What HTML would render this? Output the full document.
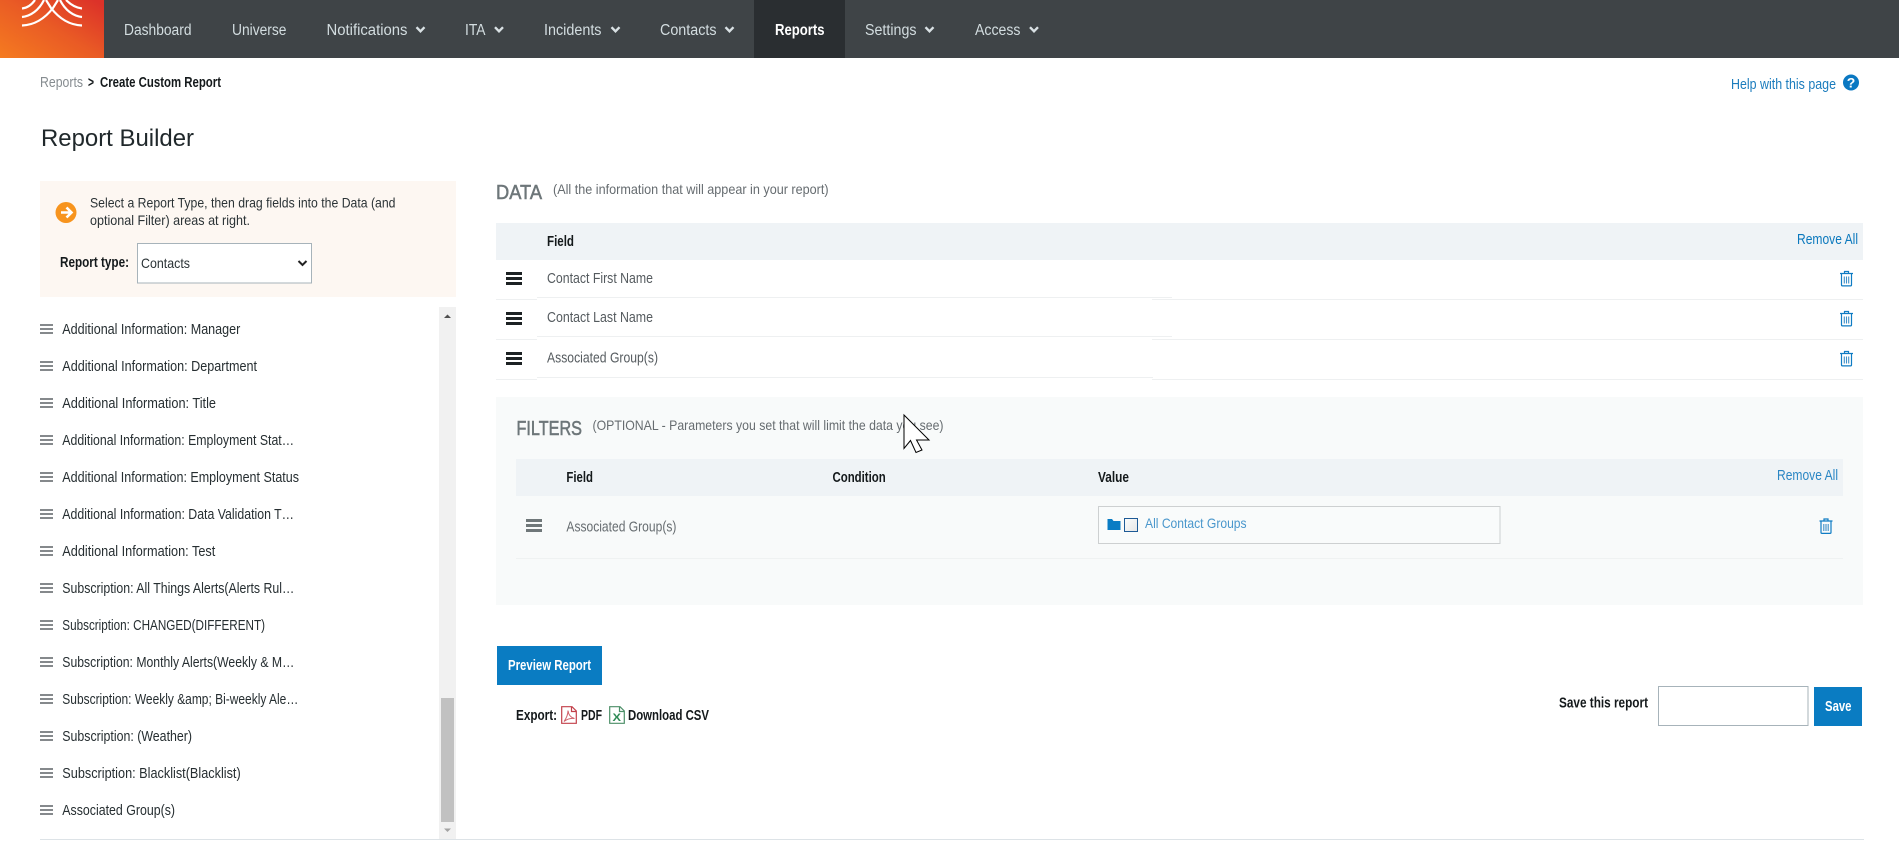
<!DOCTYPE html>
<html lang="en">
<head>
<meta charset="utf-8">
<title>Report Builder</title>
<style>
html,body{margin:0;padding:0;background:#fff;width:1899px;height:844px;overflow:hidden}
svg{display:block}
text{font-family:"Liberation Sans",Arial,sans-serif;font-size:14.5px;fill:#2b3336}
.nav{font-size:15.5px;fill:#d3dde0}
.b{font-weight:bold;fill:#14191b}
.g{fill:#666c70}
.l{fill:#0a78bd}
.li{fill:#262e31}
.h{font-size:20px;fill:#6d7679;stroke:#6d7679;stroke-width:.55}
</style>
</head>
<body>
<svg width="1899" height="844" viewBox="0 0 1899 844" xmlns="http://www.w3.org/2000/svg">
<defs>
<linearGradient id="lg" x1="0" y1="1" x2="1" y2="0.1">
<stop offset="0" stop-color="#f57b20"/><stop offset="0.55" stop-color="#e95a25"/><stop offset="1" stop-color="#dc3229"/>
</linearGradient>
<linearGradient id="cb" x1="0" y1="0" x2="1" y2="1">
<stop offset="0" stop-color="#fbfcfc"/><stop offset="1" stop-color="#e6e6e6"/>
</linearGradient>
<symbol id="chev" viewBox="0 0 10 7"><path d="M1 1.2 5 5.3 9 1.2" fill="none" stroke="#d9e1e4" stroke-width="2.4"/></symbol>
<symbol id="trash" viewBox="0 0 14 16">
<path d="M5 2.500V1h4v1.500M.5 3h13M2 3.200V14.400c0 .6.4 1 1 1h8c.6 0 1-.4 1-1V3.200" fill="none" stroke="#0f7cc4" stroke-width="1.200"/>
<path d="M4.800 6v7M7 6v7M9.200 6v7" stroke="#3f8fc7" stroke-width="1.100"/>
</symbol>
<symbol id="menu" viewBox="0 0 16 13"><path d="M0 0h16v3H0zM0 5h16v3H0zM0 10h16v3H0z"/></symbol>
<symbol id="lmenu" viewBox="0 0 13 10"><path d="M0 0h13v2H0zM0 4h13v2H0zM0 8h13v2H0z" fill="#85898c"/></symbol>
</defs>

<!-- top nav -->
<rect width="1899" height="58" fill="#3f4447"/>
<rect width="104" height="58" fill="url(#lg)"/>
<g fill="none" stroke="#fff" stroke-width="2.200">
<path d="M22 8.500C27 8 31.500 5 35 0"/>
<path d="M22 17C31 16 39 10 44 0"/>
<path d="M22 25.500C36 25 46 17 53 8L58 0"/>
<path d="M82 8.500C77 8 71 5 66 0"/>
<path d="M82 17C73 16 65 10 60 0"/>
<path d="M82 25.500C68 25 58 17 51 8L46 0"/>
</g>
<rect x="754" width="91" height="58" fill="#2a2e31"/>
<text class="nav" x="124" y="35" textLength="67.500" lengthAdjust="spacingAndGlyphs">Dashboard</text>
<text class="nav" x="232" y="35" textLength="54.500" lengthAdjust="spacingAndGlyphs">Universe</text>
<text class="nav" x="326.500" y="35" textLength="81" lengthAdjust="spacingAndGlyphs">Notifications</text>
<use href="#chev" x="415.500" y="26" width="10" height="7"/>
<text class="nav" x="465" y="35" textLength="20.500" lengthAdjust="spacingAndGlyphs">ITA</text>
<use href="#chev" x="494" y="26" width="10" height="7"/>
<text class="nav" x="544" y="35" textLength="57.500" lengthAdjust="spacingAndGlyphs">Incidents</text>
<use href="#chev" x="610.500" y="26" width="10" height="7"/>
<text class="nav" x="660" y="35" textLength="56.500" lengthAdjust="spacingAndGlyphs">Contacts</text>
<use href="#chev" x="724.500" y="26" width="10" height="7"/>
<text class="nav" x="775" y="35" textLength="49.500" lengthAdjust="spacingAndGlyphs" style="font-weight:bold;fill:#fff">Reports</text>
<text class="nav" x="865" y="35" textLength="51.500" lengthAdjust="spacingAndGlyphs">Settings</text>
<use href="#chev" x="924.500" y="26" width="10" height="7"/>
<text class="nav" x="975" y="35" textLength="45.500" lengthAdjust="spacingAndGlyphs">Access</text>
<use href="#chev" x="1029" y="26" width="10" height="7"/>

<!-- breadcrumb -->
<text x="40" y="87" textLength="43" lengthAdjust="spacingAndGlyphs" style="fill:#868c90">Reports</text>
<text class="b" x="88" y="87" textLength="6" lengthAdjust="spacingAndGlyphs">&gt;</text>
<text x="100" y="87" textLength="121" lengthAdjust="spacingAndGlyphs" style="fill:#14191b;font-weight:bold">Create Custom Report</text>
<text class="l" x="1731" y="89" textLength="105" lengthAdjust="spacingAndGlyphs" style="fill:#1b7cbd">Help with this page</text>
<circle cx="1851" cy="82.500" r="8" fill="#0a78c2"/>
<text x="1851" y="87.500" text-anchor="middle" style="font-size:14px;font-weight:bold;fill:#fff">?</text>

<text x="41" y="146" textLength="153" lengthAdjust="spacingAndGlyphs" style="font-size:24px;fill:#20282b">Report Builder</text>

<!-- left instruction panel -->
<rect x="40" y="181" width="416" height="116" fill="#fdf7f2"/>
<circle cx="66" cy="212.500" r="10.500" fill="#f7941e"/>
<path d="M61 212.500H71M66.500 207.500 71.500 212.500 66.500 217.500" fill="none" stroke="#fff" stroke-width="2.600"/>
<text x="90" y="207.500" textLength="305.500" lengthAdjust="spacingAndGlyphs" style="font-size:14px">Select a Report Type, then drag fields into the Data (and</text>
<text x="90" y="225" textLength="160" lengthAdjust="spacingAndGlyphs" style="font-size:14px">optional Filter) areas at right.</text>
<text class="b" x="60" y="267" textLength="69" lengthAdjust="spacingAndGlyphs">Report type:</text>
<rect x="137.500" y="243.500" width="174" height="39.500" fill="#fff" stroke="#a7b3ba"/>
<text x="141" y="268" textLength="49" lengthAdjust="spacingAndGlyphs" style="font-size:14px">Contacts</text>
<path d="M298.500 261 302.500 265 306.500 261" fill="none" stroke="#222" stroke-width="2"/>

<!-- field list -->
<use href="#lmenu" x="40" y="324" width="13" height="10"/>
<text class="li" x="62.300" y="334" textLength="178" lengthAdjust="spacingAndGlyphs">Additional Information: Manager</text>
<use href="#lmenu" x="40" y="361" width="13" height="10"/>
<text class="li" x="62.300" y="371" textLength="194.700" lengthAdjust="spacingAndGlyphs">Additional Information: Department</text>
<use href="#lmenu" x="40" y="398" width="13" height="10"/>
<text class="li" x="62.300" y="408" textLength="153.700" lengthAdjust="spacingAndGlyphs">Additional Information: Title</text>
<use href="#lmenu" x="40" y="435" width="13" height="10"/>
<text class="li" x="62.300" y="445" textLength="231.700" lengthAdjust="spacingAndGlyphs">Additional Information: Employment Stat…</text>
<use href="#lmenu" x="40" y="472" width="13" height="10"/>
<text class="li" x="62.300" y="482" textLength="236.700" lengthAdjust="spacingAndGlyphs">Additional Information: Employment Status</text>
<use href="#lmenu" x="40" y="509" width="13" height="10"/>
<text class="li" x="62.300" y="519" textLength="231.700" lengthAdjust="spacingAndGlyphs">Additional Information: Data Validation T…</text>
<use href="#lmenu" x="40" y="546" width="13" height="10"/>
<text class="li" x="62.300" y="556" textLength="153" lengthAdjust="spacingAndGlyphs">Additional Information: Test</text>
<use href="#lmenu" x="40" y="583" width="13" height="10"/>
<text class="li" x="62.300" y="593" textLength="232" lengthAdjust="spacingAndGlyphs">Subscription: All Things Alerts(Alerts Rul…</text>
<use href="#lmenu" x="40" y="620" width="13" height="10"/>
<text class="li" x="62.300" y="630" textLength="202.700" lengthAdjust="spacingAndGlyphs">Subscription: CHANGED(DIFFERENT)</text>
<use href="#lmenu" x="40" y="657" width="13" height="10"/>
<text class="li" x="62.300" y="667" textLength="232" lengthAdjust="spacingAndGlyphs">Subscription: Monthly Alerts(Weekly &amp; M…</text>
<use href="#lmenu" x="40" y="694" width="13" height="10"/>
<text class="li" x="62.300" y="704" textLength="236" lengthAdjust="spacingAndGlyphs">Subscription: Weekly &amp;amp; Bi-weekly Ale…</text>
<use href="#lmenu" x="40" y="731" width="13" height="10"/>
<text class="li" x="62.300" y="741" textLength="129.700" lengthAdjust="spacingAndGlyphs">Subscription: (Weather)</text>
<use href="#lmenu" x="40" y="768" width="13" height="10"/>
<text class="li" x="62.300" y="778" textLength="178.400" lengthAdjust="spacingAndGlyphs">Subscription: Blacklist(Blacklist)</text>
<use href="#lmenu" x="40" y="805" width="13" height="10"/>
<text class="li" x="62.300" y="815" textLength="112.700" lengthAdjust="spacingAndGlyphs">Associated Group(s)</text>

<!-- scrollbar -->
<rect x="439" y="307" width="17" height="532" fill="#f1f1f1"/>
<rect x="441" y="698" width="13" height="124" fill="#c1c1c1"/>
<path d="M444 318h7l-3.500-3.500z" fill="#505050"/>
<path d="M444 828.500h7l-3.500 3.500z" fill="#a3a3a3"/>
<rect x="40" y="839" width="1824" height="1" fill="#dde3e7"/>

<!-- DATA -->
<text class="h" x="496" y="199" textLength="46" lengthAdjust="spacingAndGlyphs">DATA</text>
<text class="g" x="553" y="194" textLength="275.600" lengthAdjust="spacingAndGlyphs" style="font-size:14px">(All the information that will appear in your report)</text>
<rect x="496" y="223" width="1367" height="37" fill="#eff3f6"/>
<text class="b" x="547" y="246" textLength="27" lengthAdjust="spacingAndGlyphs">Field</text>
<text class="l" x="1797" y="244" textLength="61" lengthAdjust="spacingAndGlyphs">Remove All</text>

<use href="#menu" x="506" y="272" width="16" height="13" fill="#1d2224"/>
<text class="g" x="547" y="283" textLength="106" lengthAdjust="spacingAndGlyphs" style="fill:#555b5f">Contact First Name</text>
<use href="#trash" x="1839.500" y="270.500" width="14" height="16"/>
<rect x="496" y="299" width="41" height="1" fill="#eef0f1"/>
<rect x="537" y="297" width="635" height="1" fill="#eef0f1"/>
<rect x="1152" y="299" width="711" height="1" fill="#eef0f1"/>

<use href="#menu" x="506" y="312" width="16" height="13" fill="#1d2224"/>
<text class="g" x="547" y="322" textLength="106" lengthAdjust="spacingAndGlyphs" style="fill:#555b5f">Contact Last Name</text>
<use href="#trash" x="1839.500" y="310.500" width="14" height="16"/>
<rect x="496" y="339" width="41" height="1" fill="#eef0f1"/>
<rect x="537" y="336" width="635" height="1" fill="#eef0f1"/>
<rect x="1152" y="339" width="711" height="1" fill="#eef0f1"/>

<use href="#menu" x="506" y="352" width="16" height="13" fill="#1d2224"/>
<text class="g" x="547" y="362.500" textLength="111" lengthAdjust="spacingAndGlyphs" style="fill:#555b5f">Associated Group(s)</text>
<use href="#trash" x="1839.500" y="350.500" width="14" height="16"/>
<rect x="496" y="379" width="41" height="1" fill="#eef0f1"/>
<rect x="537" y="377" width="616" height="1" fill="#eef0f1"/>
<rect x="1152" y="379" width="711" height="1" fill="#eef0f1"/>

<!-- FILTERS -->
<rect x="496" y="397" width="1367" height="208" fill="#f8fafa"/>
<text class="h" x="516.500" y="435" textLength="65.500" lengthAdjust="spacingAndGlyphs">FILTERS</text>
<text class="g" x="592.500" y="430" textLength="351" lengthAdjust="spacingAndGlyphs" style="font-size:14px">(OPTIONAL - Parameters you set that will limit the data you see)</text>
<rect x="516" y="459" width="1327" height="37" fill="#eff3f6"/>
<text class="b" x="566.400" y="482" textLength="26.600" lengthAdjust="spacingAndGlyphs">Field</text>
<text class="b" x="832.500" y="482" textLength="53.200" lengthAdjust="spacingAndGlyphs">Condition</text>
<text class="b" x="1098" y="482" textLength="31" lengthAdjust="spacingAndGlyphs">Value</text>
<text class="l" x="1777" y="480" textLength="61" lengthAdjust="spacingAndGlyphs" style="fill:#2a86c4">Remove All</text>
<use href="#menu" x="526" y="519" width="16" height="13" fill="#6f7779"/>
<text class="g" x="566.400" y="531.700" textLength="110" lengthAdjust="spacingAndGlyphs">Associated Group(s)</text>
<rect x="1098.500" y="506.500" width="401.500" height="37" fill="#f9fbfb" stroke="#cdd0d1"/>
<path d="M1107.500 519h4.500l1.500 2h7v9h-13z" fill="#0a7cc4"/>
<rect x="1124.500" y="518.500" width="13" height="13" fill="url(#cb)" stroke="#1d5a96"/>
<text x="1145" y="528" textLength="101.600" lengthAdjust="spacingAndGlyphs" style="font-size:14px;fill:#4a97cc">All Contact Groups</text>
<use href="#trash" x="1819" y="518" width="14" height="16"/>
<rect x="516" y="558" width="1327" height="1" fill="#eff2f2"/>

<!-- cursor -->
<path d="M904 415V448.500L910.500 440.500 916 452.500 922 450 916.500 440H929Z" fill="#fff" stroke="#000" stroke-width="1"/>

<!-- actions -->
<rect x="497" y="646" width="105" height="39" fill="#0a7cc2"/>
<text x="508" y="670" textLength="83" lengthAdjust="spacingAndGlyphs" style="font-weight:bold;fill:#fff">Preview Report</text>
<text class="b" x="516" y="720" textLength="41" lengthAdjust="spacingAndGlyphs">Export:</text>
<path d="M561.700 706.700H572L576.300 711V723.300H561.700ZM571.500 706.700V711.500H576.300" fill="#fff" stroke="#c2404a" stroke-width="1.200"/>
<path d="M564 721.500C566.500 718 568 714 568 710.500 568.500 714.500 570.500 717.500 574.500 718.500 571 718 567 719 564 721.500Z" fill="none" stroke="#d0606a" stroke-width="1"/>
<text class="b" x="581" y="720" textLength="21" lengthAdjust="spacingAndGlyphs">PDF</text>
<path d="M609.700 706.700H620L624.300 711V723.300H609.700ZM619.500 706.700V711.500H624.300" fill="#fff" stroke="#4c8f68" stroke-width="1.200"/>
<text x="612.500" y="721" textLength="8.500" lengthAdjust="spacingAndGlyphs" style="font-size:11px;fill:#2e8a55;font-weight:bold">X</text>
<text class="b" x="628" y="720" textLength="81" lengthAdjust="spacingAndGlyphs">Download CSV</text>

<text class="b" x="1559" y="707.700" textLength="89" lengthAdjust="spacingAndGlyphs">Save this report</text>
<rect x="1658.500" y="686.500" width="149.500" height="39" fill="#fff" stroke="#a7b3ba"/>
<rect x="1814" y="687" width="48" height="39" fill="#0a7cc2"/>
<text x="1825" y="711" textLength="26.500" lengthAdjust="spacingAndGlyphs" style="font-weight:bold;fill:#fff">Save</text>
</svg>
</body>
</html>
